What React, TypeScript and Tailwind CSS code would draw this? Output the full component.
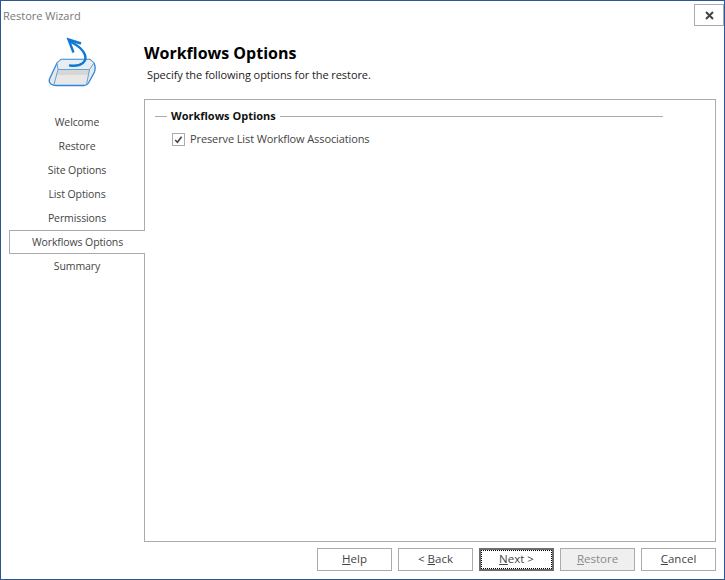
const font = "font-['Open_Sans','Noto_Sans',sans-serif]";

const steps = ['Welcome', 'Restore', 'Site Options', 'List Options', 'Permissions', 'Workflows Options', 'Summary'];

function WizardIcon() {
  return (
    <svg width="60" height="65" viewBox="0 0 60 65" fill="none">
      <path
        d="M17 33 L9.5 49 Q8.5 52 11 54 Q13 55.5 16 55.5 L44 55.5 Q47 55.5 48.5 53 L54.5 42 Q55.5 39 55 36 L54 33 L50 29.5 L21 29.5 Z"
        fill="#e8e8e8"
        stroke="#2f86d6"
        strokeWidth="1.3"
        strokeLinejoin="round"
      />
      <path d="M18 40 L50 40 L48.5 45 L17 45 Z" fill="#d6d6d6" />
      <path d="M17 33 L21 29.5 L50 29.5 L54 33 L49.5 39.5 L18 39.5 Z" fill="#e9edf1" stroke="#5da3e0" strokeWidth="1" strokeLinejoin="round" />
      <path d="M18 39.5 L14 54.5 M49.5 39.5 L46.5 54.5" stroke="#5da3e0" strokeWidth="1" />
      <path d="M30 35.5 C42 37 47 31 45 25 C43 19 37 15 31 12" stroke="#0f78d4" strokeWidth="2.4" strokeLinecap="round" />
      <path d="M41 13.5 L28.5 9.5 L33.5 22.5" stroke="#0f78d4" strokeWidth="2.4" strokeLinejoin="miter" />
    </svg>
  );
}

function WizardButton({ pre, hot, post, disabled, focused }: { pre?: string; hot: string; post: string; disabled?: boolean; focused?: boolean }) {
  const label = (
    <span className="whitespace-pre">
      {pre}
      <span className="underline">{hot}</span>
      {post}
    </span>
  );
  if (focused) {
    return (
      <div className="flex h-[23px] w-[75px] border-2 border-[#6d6d6d] bg-white">
        <div className="flex flex-1 items-center justify-center border border-dotted border-black pb-px text-[11.5px] text-[#444]">{label}</div>
      </div>
    );
  }
  return (
    <div
      className={`flex h-[23px] w-[75px] items-center justify-center border border-[#ababab] pb-px text-[11.5px] ${
        disabled ? 'bg-[#efefef] text-[#8a8a8a]' : 'bg-white text-[#444]'
      }`}
    >
      {label}
    </div>
  );
}

export default function App() {
  return (
    <div className={`${font} flex h-[580px] w-[725px] flex-col border border-[#2b579a] bg-white`}>
      <div className="flex h-[29px] items-start justify-between pl-[2px]">
        <span className="mt-[6px] text-[11px] leading-[18px] text-[#777]">Restore Wizard</span>
        <div className="mt-[3px] flex h-[22px] w-[30px] items-center justify-center border border-[#ababab]">
          <svg width="9" height="9" viewBox="0 0 9 9">
            <path d="M1 1 L8 8 M8 1 L1 8" stroke="#444" strokeWidth="2" />
          </svg>
        </div>
      </div>

      <div className="flex h-[69px]">
        <div className="w-[143px] pl-[39px]">
          <WizardIcon />
        </div>
        <div className="flex flex-col">
          <h1 className="mt-[12px] text-[16px] leading-[22px] font-bold text-black">Workflows Options</h1>
          <p className="mt-[3px] ml-[3px] text-[11px] leading-[16px] tracking-[-0.07px] text-[#222]">Specify the following options for the restore.</p>
        </div>
      </div>

      <div className="flex flex-1">
        <nav className="relative z-10 w-[143px] pt-[11px] pl-2">
          {steps.map((step) =>
            step === 'Workflows Options' ? (
              <div key={step} className="-mr-px flex h-[24px] items-center justify-center border-y border-l border-[#ababab] bg-white pt-px text-[10.5px] tracking-[-0.1px] text-[#444]">
                {step}
              </div>
            ) : (
              <div key={step} className="flex h-[24px] items-center justify-center pt-px pl-px text-[10.5px] tracking-[-0.1px] text-[#444]">
                {step}
              </div>
            ),
          )}
        </nav>
        <div className="mr-2 flex-1 border border-[#ababab] pt-[7px] pr-[52px] pl-[10px]">
          <div className="flex items-center gap-1">
            <div className="h-px w-[12px] bg-[#ababab]" />
            <span className="text-[11px] leading-[18px] font-bold text-[#111]">Workflows Options</span>
            <div className="h-px flex-1 bg-[#ababab]" />
          </div>
          <label className="mt-[6px] ml-[17px] flex items-center gap-[5px]">
            <span className="flex h-[13px] w-[13px] items-center justify-center border border-[#ababab] bg-white">
              <svg width="9" height="9" viewBox="0 0 9 9" fill="none">
                <path d="M1.2 5 L3.4 7.2 L7.6 1.8" stroke="#444" strokeWidth="1.6" />
              </svg>
            </span>
            <span className="text-[11px] leading-[16px] tracking-[-0.11px] text-[#444]">Preserve List Workflow Associations</span>
          </label>
        </div>
      </div>

      <div className="flex h-[37px] justify-end gap-[6px] pt-[6px] pr-2">
        <WizardButton hot="H" post="elp" />
        <WizardButton pre="< " hot="B" post="ack" />
        <WizardButton hot="N" post="ext >" focused />
        <WizardButton hot="R" post="estore" disabled />
        <WizardButton hot="C" post="ancel" />
      </div>
    </div>
  );
}
